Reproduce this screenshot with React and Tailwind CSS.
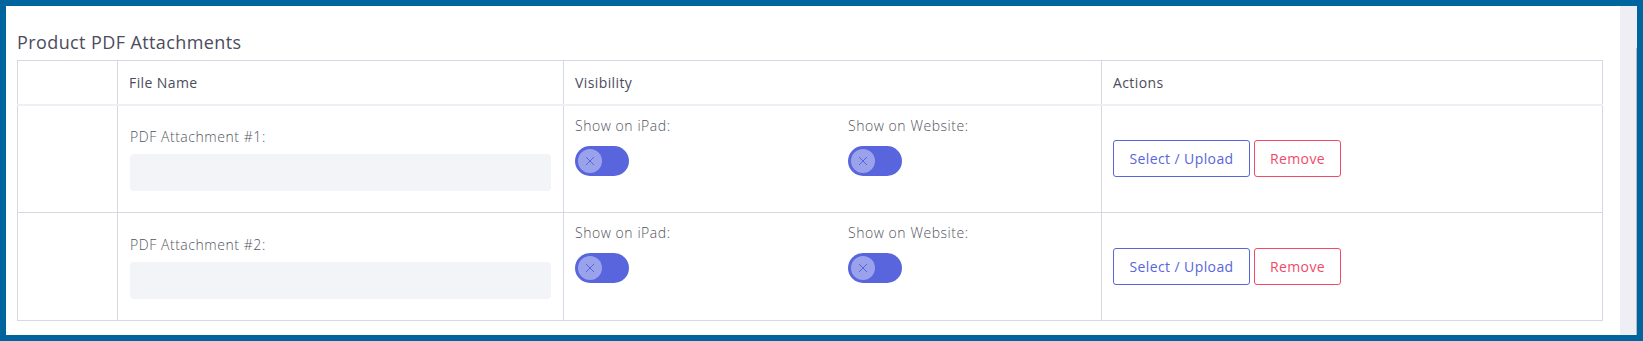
import React from "react";

function Toggle() {
  return (
    <div className="relative w-[54px] h-[30px] rounded-full bg-[#5865dc]">
      <div className="absolute left-[3px] top-[3px] w-[24px] h-[24px] rounded-full bg-[#9aa2ec] flex items-center justify-center">
        <svg width="10" height="10" viewBox="0 0 10 10">
          <path d="M1 1 L9 9 M9 1 L1 9" stroke="#5865dc" strokeWidth="1" fill="none" />
        </svg>
      </div>
    </div>
  );
}

const label = "text-[14px] leading-[20px] font-light text-[#52535e] tracking-[0.55px]";

function Row({ n }) {
  return (
    <tr>
      <td className="border border-[#d6d9e2] h-[108px]"></td>
      <td className="border border-[#d6d9e2] px-[12px] align-middle">
        <div className={label}>PDF Attachment #{n}:</div>
        <div className="mt-[7px] h-[37px] w-full rounded-[4px] bg-[#f3f4f7]"></div>
      </td>
      <td className="border border-[#d6d9e2] px-[11px] pt-[10px] align-top">
        <div className="flex">
          <div className="w-[273px]">
            <div className={label}>Show on iPad:</div>
            <div className="mt-[10px]">
              <Toggle />
            </div>
          </div>
          <div className="flex-1">
            <div className={label}>Show on Website:</div>
            <div className="mt-[10px]">
              <Toggle />
            </div>
          </div>
        </div>
      </td>
      <td className="border border-[#d6d9e2] px-[11px] align-middle">
        <div className="flex gap-[4px]">
          <button className="w-[137px] h-[37px] rounded-[3px] border border-[#5865dc] text-[#5865dc] text-[14px] tracking-[0.4px] bg-white">
            Select / Upload
          </button>
          <button className="w-[87px] h-[37px] rounded-[3px] border border-[#ef4b68] text-[#ef4b68] text-[14px] tracking-[0.4px] bg-white">
            Remove
          </button>
        </div>
      </td>
    </tr>
  );
}

const th = "border border-[#d6d9e2] border-b-2 border-b-[#eff0f6] text-left px-[11px] text-[14px] font-medium text-[#4b4c5c] tracking-[0.4px]";

export default function App() {
  return (
    <div className="w-[1643px] h-[341px] bg-[#00649f] p-[6px] font-['Open_Sans','Noto_Sans',sans-serif]">
      <div className="flex h-full">
        <div className="flex-1 bg-white pl-[11px] pr-[17px] pt-[23px]">
          <div className="text-[18px] leading-[27px] font-medium text-[#4b4c5c] tracking-[0.4px] mb-[4px]">Product PDF Attachments</div>
          <table className="w-[1585px] table-fixed border-collapse">
            <colgroup>
              <col className="w-[100px]" />
              <col className="w-[446px]" />
              <col className="w-[538px]" />
              <col className="w-[501px]" />
            </colgroup>
            <thead>
              <tr className="h-[44px]">
                <th className="border border-[#d6d9e2] border-b-2 border-b-[#eff0f6]"></th>
                <th className={th}>File Name</th>
                <th className={th}>Visibility</th>
                <th className={th}>Actions</th>
              </tr>
            </thead>
            <tbody>
              <Row n={1} />
              <Row n={2} />
            </tbody>
          </table>
        </div>
        <div className="w-[18px] bg-[#eeeef4] flex justify-end">
          <div className="w-[1px] mt-[42px] bg-[#b8b8c0]"></div>
        </div>
      </div>
    </div>
  );
}
